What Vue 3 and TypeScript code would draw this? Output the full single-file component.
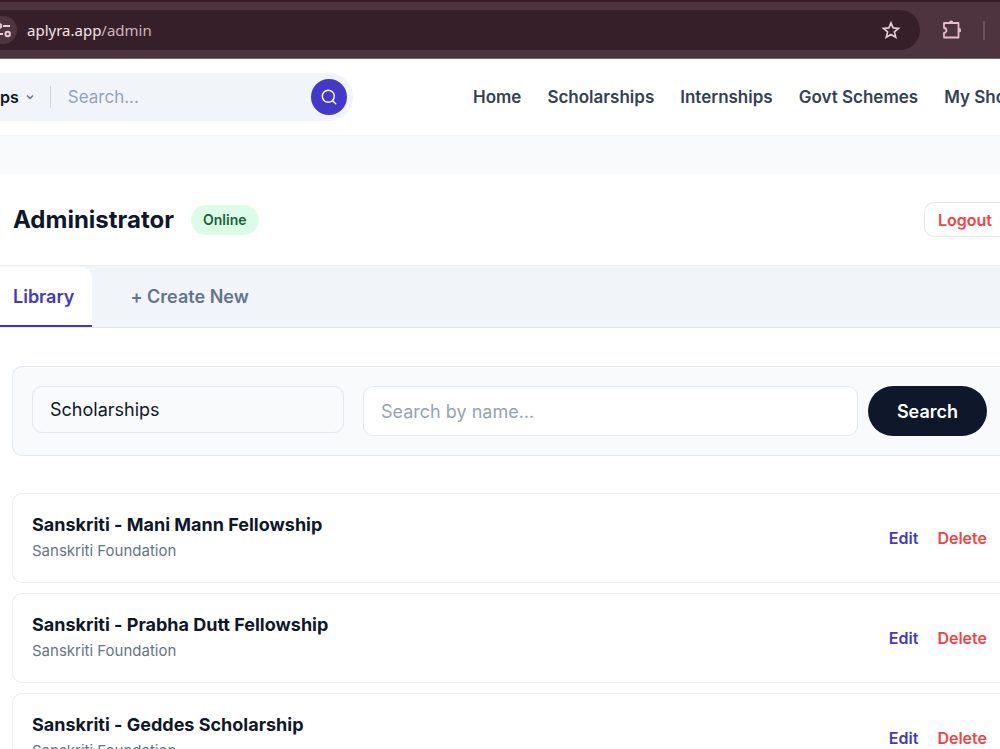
<script setup lang="ts">
import { ref } from 'vue'

interface Entry {
  id: number
  title: string
  provider: string
}

const links: string[] = ['Home', 'Scholarships', 'Internships', 'Govt Schemes', 'My Sho']
const entries: Entry[] = [
  { id: 1, title: 'Sanskriti - Mani Mann Fellowship', provider: 'Sanskriti Foundation' },
  { id: 2, title: 'Sanskriti - Prabha Dutt Fellowship', provider: 'Sanskriti Foundation' },
  { id: 3, title: 'Sanskriti - Geddes Scholarship', provider: 'Sanskriti Foundation' },
]
const siteQuery = ref('')
const nameQuery = ref('')
const category = ref('Scholarships')
</script>

<template>
  <div class="page">
    <div class="browser">
      <div class="omnibox">
        <button class="site-info" type="button" aria-label="Site information">
          <svg width="17" height="28" viewBox="0 0 17 28" fill="none" stroke="#e6cdd5" stroke-width="2">
            <circle cx="-1" cy="10" r="2.2" />
            <path d="M3 10h7M-3 18h6" />
            <circle cx="7.7" cy="18" r="2.2" />
          </svg>
        </button>
        <span class="url">aplyra.app<span class="path">/admin</span></span>
        <button class="star" type="button" aria-label="Bookmark this page">
          <svg width="20" height="20" viewBox="0 0 20 20" fill="none" stroke="#e2ccd3" stroke-width="1.7">
            <path d="M10 2.9l2.1 5 5.4.5-4.1 3.5 1.3 5.3-4.7-2.8-4.7 2.8 1.3-5.3L2.5 8.4l5.4-.5z" />
          </svg>
        </button>
      </div>
      <button class="extensions" type="button" aria-label="Extensions">
        <svg width="22" height="22" viewBox="0 0 22 22" fill="none" stroke="#e8bccb" stroke-width="1.8" stroke-linejoin="round">
          <path d="M3 4h14.5v14.5H3v-4.6a2.4 2.4 0 0 0 0-4.9z" />
          <path d="M8 3.6a2.2 2.2 0 0 1 4.4 0zM18 9a2.2 2.2 0 0 1 0 4.4z" fill="#e8bccb" stroke="none" />
        </svg>
      </button>
      <span class="divider"></span>
    </div>

    <header class="site-header">
      <form class="site-search" @submit.prevent>
        <button class="scope" type="button">
          ps
          <svg width="10" height="10" viewBox="0 0 10 10" fill="none" stroke="#64748b" stroke-width="1.5">
            <path d="M2 3.5l3 3 3-3" />
          </svg>
        </button>
        <input v-model="siteQuery" type="text" placeholder="Search..." aria-label="Search" />
        <button class="go" type="submit" aria-label="Submit search">
          <svg width="16" height="16" viewBox="0 0 16 16" fill="none" stroke="#ffffff" stroke-width="1.4" stroke-linecap="round">
            <circle cx="7.3" cy="7.3" r="6" />
            <path d="M11.7 11.7l3 3" />
          </svg>
        </button>
      </form>
      <nav>
        <a v-for="link in links" :key="link" href="#">{{ link }}</a>
      </nav>
    </header>

    <main>
      <section class="admin-bar">
        <h1>Administrator</h1>
        <span class="badge">Online</span>
        <button class="logout" type="button">Logout</button>
      </section>

      <div class="tabs">
        <button class="tab active" type="button">Library</button>
        <button class="tab" type="button">+ Create New</button>
      </div>

      <div class="content">
        <form class="filters" @submit.prevent>
          <select v-model="category" aria-label="Category">
            <option>Scholarships</option>
          </select>
          <div class="lookup">
            <input v-model="nameQuery" type="text" placeholder="Search by name..." aria-label="Search by name" />
            <button type="submit">Search</button>
          </div>
        </form>

        <article v-for="entry in entries" :key="entry.id" class="entry">
          <div class="info">
            <h2>{{ entry.title }}</h2>
            <p>{{ entry.provider }}</p>
          </div>
          <button class="edit" type="button">Edit</button>
          <button class="delete" type="button">Delete</button>
        </article>
      </div>
    </main>
  </div>
</template>

<style>
body {
  margin: 0;
}
html {
  overflow: hidden;
}
</style>

<style scoped>
.page {
  height: 100vh;
  overflow: hidden;
  background: #f8fafc;
  color: #0f172a;
  font-family: Inter, "Liberation Sans", sans-serif;
  font-variant-ligatures: no-contextual;
}
* {
  box-sizing: border-box;
}
button,
input,
select {
  margin: 0;
  padding: 0;
  border: 0;
  background: none;
  font: inherit;
  color: inherit;
  outline: 0;
}
svg {
  display: block;
}
.browser {
  display: flex;
  align-items: center;
  height: 59px;
  padding: 0 15px 0 0;
  background: #4e343f;
  border-top: 2px solid #351c26;
  border-bottom: 1px solid #7b6670;
}
.omnibox {
  flex: 1;
  display: flex;
  align-items: center;
  height: 40px;
  padding-right: 19px;
  background: #371f29;
  border-radius: 0 20px 20px 0;
}
.site-info {
  width: 17px;
  height: 28px;
  overflow: hidden;
  border-radius: 0 14px 14px 0;
  background: #4e343f;
}
.url {
  flex: 1;
  margin-left: 10px;
  font: 15px/24px "Noto Sans", sans-serif;
  color: #f3e3e8;
}
.path {
  color: #cdb5bd;
}
.extensions {
  margin: 0 20px 0 21px;
}
.divider {
  width: 2px;
  height: 19px;
  background: #6b4f5a;
}
.site-header {
  display: flex;
  align-items: center;
  gap: 120px;
  height: 77px;
  background: #ffffff;
  border-bottom: 1px solid #f1f5f9;
}
.site-search {
  flex: 1 1 353px;
  min-width: 0;
  display: flex;
  align-items: center;
  height: 48px;
  padding-right: 6px;
  border-radius: 0 24px 24px 0;
  background: #f1f5f9;
}
.scope {
  display: flex;
  align-items: center;
  gap: 6px;
  height: 22px;
  padding-right: 15px;
  border-right: 1px solid #cbd5e1;
  font-size: 16px;
  font-weight: 600;
}
.site-search input {
  flex: 1;
  min-width: 0;
  padding-left: 17px;
  font-size: 17px;
}
input::placeholder {
  color: #94a3b8;
  opacity: 1;
}
.go {
  display: grid;
  place-items: center;
  width: 36px;
  height: 36px;
  border-radius: 50%;
  background: #4338ca;
}
nav {
  flex: 0 0 527px;
  display: flex;
  gap: 26px;
  overflow: hidden;
  white-space: nowrap;
}
nav a {
  flex: none;
  font-size: 17px;
  line-height: 28px;
  font-weight: 600;
  color: #334155;
  text-decoration: none;
}
main {
  margin-top: 38px;
  background: #ffffff;
}
.admin-bar {
  display: flex;
  align-items: center;
  height: 91px;
  padding-left: 13px;
}
h1 {
  margin: 0;
  font-size: 24px;
  line-height: 32px;
  font-weight: 700;
}
.badge {
  margin-left: 17px;
  padding: 0 12px;
  border-radius: 15px;
  background: #dcfce7;
  color: #166534;
  font-size: 14px;
  line-height: 30px;
  font-weight: 600;
}
.logout {
  height: 35px;
  margin-left: auto;
  padding: 0 8px 0 13px;
  border: 1px solid #e2e8f0;
  border-right: 0;
  border-radius: 10px 0 0 10px;
  color: #ef4444;
  font-size: 16px;
  font-weight: 600;
}
.tabs {
  display: flex;
  height: 63px;
  padding-top: 1px;
  background: #f1f5f9;
  border-top: 1px solid #e9eef4;
  border-bottom: 1px solid #e2e8f0;
}
.tab {
  padding: 0 38px;
  border-bottom: 2px solid transparent;
  color: #64748b;
  font-size: 18px;
  font-weight: 600;
}
.tab.active {
  padding: 0 18px 0 13px;
  border-radius: 0 10px 0 0;
  border-bottom-color: #4338ca;
  background: #ffffff;
  color: #4338ca;
}
.content {
  padding: 38px 0 0 12px;
}
.filters {
  display: flex;
  align-items: flex-start;
  gap: 19px;
  margin-bottom: 37px;
  padding: 19px 13px 19px 19px;
  border: 1px solid #e2e8f0;
  border-right: 0;
  border-radius: 10px 0 0 10px;
  background: #f8fafc;
}
.filters select {
  appearance: none;
  flex: 1 1 312px;
  min-width: 0;
  height: 47px;
  padding: 0 17px;
  border: 1px solid #e2e8f0;
  border-radius: 10px;
  font-size: 18px;
}
.lookup {
  flex: 2 1 624px;
  min-width: 0;
  display: flex;
  gap: 10px;
}
.lookup input {
  flex: 1;
  min-width: 0;
  height: 50px;
  padding: 0 17px;
  border: 1px solid #e2e8f0;
  border-radius: 10px;
  background: #ffffff;
  font-size: 18px;
}
.lookup button {
  padding: 0 29px;
  border-radius: 25px;
  background: #0f172a;
  color: #ffffff;
  font-size: 18px;
  font-weight: 600;
}
.entry {
  display: flex;
  align-items: center;
  gap: 19px;
  height: 90px;
  margin-bottom: 10px;
  padding: 0 13px 0 19px;
  border: 1px solid #eaeff5;
  border-right: 0;
  border-radius: 10px 0 0 10px;
  background: #ffffff;
}
.info {
  flex: 1;
  padding-bottom: 2px;
}
h2 {
  margin: 0;
  font-size: 18px;
  line-height: 28px;
  font-weight: 700;
}
p {
  margin: 0;
  color: #64748b;
  font-size: 15px;
  line-height: 24px;
}
.entry button {
  font-size: 16px;
  font-weight: 600;
}
.entry .edit {
  color: #4338ca;
}
.entry .delete {
  color: #ef4444;
}
</style>
